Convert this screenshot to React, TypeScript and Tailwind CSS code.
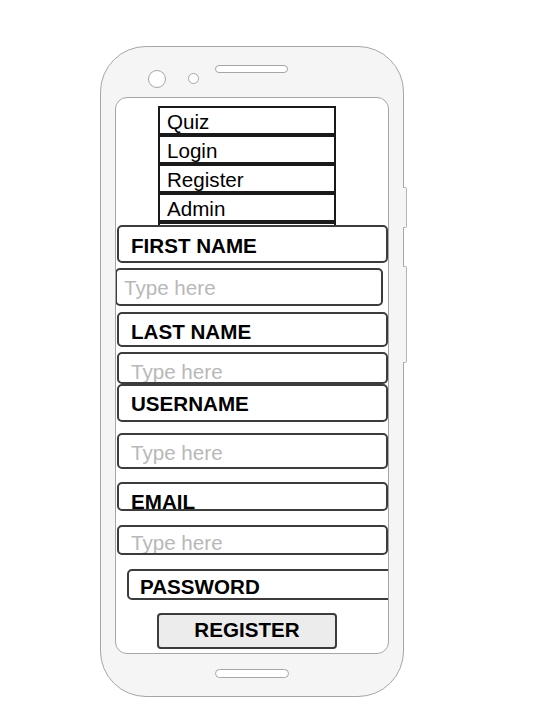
const font = { fontFamily: '"Liberation Sans", Arial, sans-serif' };

const menuItems = ['Quiz', 'Login', 'Register', 'Admin', ''];

function Label({ text, className }: { text: string; className: string }) {
  return (
    <div className={`shrink-0 overflow-hidden rounded-[5px] border-2 border-[#3c3c3c] bg-white text-[20.6px] leading-[20px] font-bold text-black ${className}`}>
      {text}
    </div>
  );
}

function Field({ className }: { className: string }) {
  return (
    <div className={`shrink-0 overflow-hidden rounded-[5px] border-2 border-[#3c3c3c] bg-white text-[20.6px] leading-[20px] text-[#b8b8b8] ${className}`}>
      Type here
    </div>
  );
}

export default function App() {
  return (
    <div className="min-h-[722px] w-[547px] bg-white pt-[46px] pl-[100px]" style={font}>
      <div className="relative h-[651px] w-[304px] rounded-[46px] border border-[#a6a6a6] bg-[#f6f5f5]">
        {/* side buttons */}
        <div className="absolute right-[-4px] top-[140px] h-[41px] w-[4px] rounded-r-[2px] border border-l-0 border-[#b4b4b4] bg-[#f6f5f5]" />
        <div className="absolute right-[-4px] top-[219px] h-[97px] w-[4px] rounded-r-[2px] border border-l-0 border-[#b4b4b4] bg-[#f6f5f5]" />

        {/* camera + speaker */}
        <div className="flex items-start pt-[18px] pl-[47px]">
          <div className="mt-[5px] h-[18px] w-[18px] rounded-full border border-[#a6a6a6] bg-white" />
          <div className="ml-[22px] mt-[8px] h-[11px] w-[11px] rounded-full border border-[#a6a6a6] bg-white" />
          <div className="ml-[16px] h-[8px] w-[73px] rounded-full border border-[#a6a6a6] bg-white" />
        </div>

        {/* screen */}
        <div className="ml-[14px] mt-[9px] flex h-[557px] w-[274px] flex-col overflow-hidden rounded-[12px] border border-[#a6a6a6] bg-white">
          <div className="ml-[42px] mt-[8px] h-[119px] w-[178px] shrink-0 overflow-hidden">
            {menuItems.map((m, i) => (
              <div key={i} className="h-[29px] border-2 border-[#1a1a1a] pl-[7px] pt-[4px] text-[20.6px] leading-[20px] text-black">
                {m}
              </div>
            ))}
          </div>

          <Label text="FIRST NAME" className="ml-[1px] h-[38px] w-[271px] pl-[12px] pt-[9px]" />
          <Field className="-ml-[1px] mt-[5px] h-[38px] w-[268px] pl-[7px] pt-[8px]" />
          <Label text="LAST NAME" className="ml-[1px] mt-[6px] h-[35px] w-[271px] pl-[12px] pt-[8px]" />
          <Field className="ml-[1px] mt-[5px] h-[32px] w-[271px] pl-[12px] pt-[8px]" />
          <Label text="USERNAME" className="ml-[1px] h-[38px] w-[271px] pl-[12px] pt-[8px]" />
          <Field className="ml-[1px] mt-[11px] h-[36px] w-[271px] pl-[12px] pt-[8px]" />
          <Label text="EMAIL" className="ml-[1px] mt-[13px] h-[29px] w-[271px] pl-[12px] pt-[8px]" />
          <Field className="ml-[1px] mt-[14px] h-[30px] w-[271px] pl-[12px] pt-[6px]" />
          <Label text="PASSWORD" className="ml-[11px] mt-[14px] h-[31px] w-[290px] pl-[11px] pt-[6px]" />

          <div className="ml-[41px] mt-[13px] h-[36px] w-[180px] shrink-0 rounded-[4px] border-2 border-[#3c3c3c] bg-[#ececec] pt-[5px] text-center text-[20.6px] leading-[20px] font-bold text-black">
            REGISTER
          </div>
        </div>

        {/* home bar */}
        <div className="ml-[114px] mt-[15px] h-[9px] w-[74px] rounded-full border border-[#a6a6a6] bg-white" />
      </div>
    </div>
  );
}
